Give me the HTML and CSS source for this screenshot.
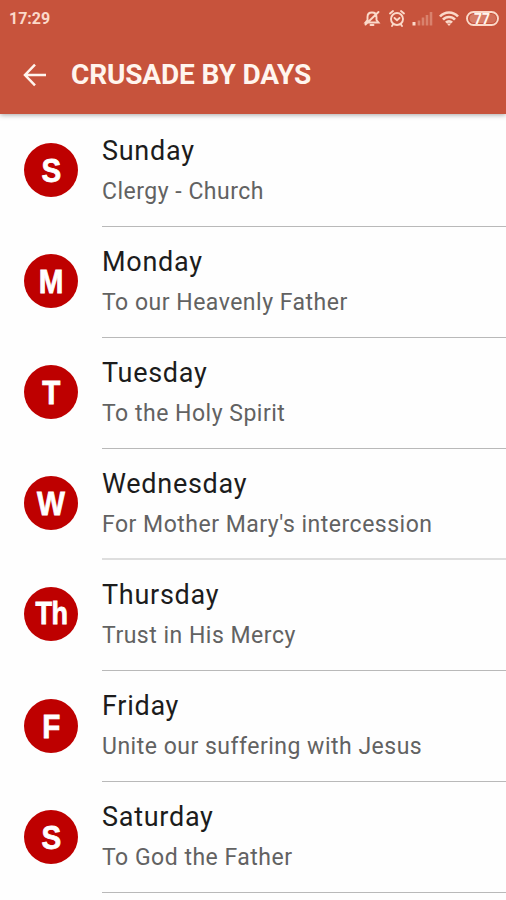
FILE: index.html
```html
<!DOCTYPE html>
<html lang="en">
<head>
<meta charset="utf-8">
<title>Crusade by Days</title>
<link rel="stylesheet" href="styles.css">
</head>
<body>
<header class="header">
  <div class="status">
    <span class="time">17:29</span>
    <svg class="status-icons" width="138" height="20" viewBox="0 0 138 20" fill="none" stroke="currentColor" stroke-width="1.900" stroke-linecap="round">
      <path d="M2.500 13.500h13l-2-2.500V8c0-3-1.600-4.500-4.500-4.500S4.500 5 4.500 8v3zM7.500 16h3M15.500 3L2.500 15.500"/>
      <circle cx="34" cy="10" r="6"/>
      <path d="M31.500 9L34 11.200l2.500-2.200M27 4.500l3-2.500M41 4.500l-3-2.500M30 15.500l-1 1.500M38 15.500l1 1.500"/>
      <path d="M51 16.500v-3.500" stroke-width="3" stroke-linecap="butt"/>
      <path d="M56 16.500v-5M60 16.500V8.500M64 16.500V6M68 16.500V3" opacity=".35" stroke-width="2.600" stroke-linecap="butt"/>
      <path d="M77 7.500a12 12 0 0 1 18 0M80 10.700a8 8 0 0 1 12 0M83 13.700a4 4 0 0 1 6 0" stroke-width="2.600" stroke-linecap="butt"/>
      <path d="M86 17l-2.200-2.500h4.400z" fill="currentColor" stroke="none"/>
      <rect x="104" y="3" width="31" height="13" rx="6.500"/>
      <path d="M111 5h12.500v9H111a4.500 4.500 0 0 1 0-9z" fill="currentColor" stroke="none" opacity=".3"/>
      <path d="M123.500 5h5a4.500 4.500 0 0 1 0 9h-5z" fill="currentColor" stroke="none" opacity=".2"/>
      <text class="battery" x="119" y="14.500" text-anchor="middle" fill="#fff5ee" stroke="none">77</text>
    </svg>
  </div>
  <div class="toolbar">
    <svg class="back" width="26" height="24" viewBox="0 0 26 24" fill="none" stroke="currentColor" stroke-width="2.500"><path d="M25 12H4M14 1.700L4 12l10 10.300"/></svg>
    <h1 class="heading">CRUSADE BY DAYS</h1>
  </div>
</header>
<main class="list">
  <div class="row"><span class="avatar"><b class="letter">S</b></span><div class="text"><div class="day">Sunday</div><div class="note">Clergy - Church</div></div></div>
  <div class="row"><span class="avatar"><b class="letter">M</b></span><div class="text"><div class="day">Monday</div><div class="note">To our Heavenly Father</div></div></div>
  <div class="row"><span class="avatar"><b class="letter">T</b></span><div class="text"><div class="day">Tuesday</div><div class="note">To the Holy Spirit</div></div></div>
  <div class="row"><span class="avatar"><b class="letter">W</b></span><div class="text soft"><div class="day">Wednesday</div><div class="note">For Mother Mary's intercession</div></div></div>
  <div class="row"><span class="avatar small"><b class="letter">Th</b></span><div class="text"><div class="day">Thursday</div><div class="note">Trust in His Mercy</div></div></div>
  <div class="row"><span class="avatar"><b class="letter">F</b></span><div class="text"><div class="day">Friday</div><div class="note">Unite our suffering with Jesus</div></div></div>
  <div class="row"><span class="avatar"><b class="letter">S</b></span><div class="text"><div class="day">Saturday</div><div class="note">To God the Father</div></div></div>
</main>
</body>
</html>
```
FILE: styles.css
```css
* { box-sizing: border-box; }
body {
  margin: 0;
  height: 900px;
  overflow: hidden;
  background: #fefefe;
  font-family: Roboto, "Liberation Sans", sans-serif;
}
.header {
  position: relative;
  height: 114px;
  background: #c7533c;
  color: #fff5ee;
  box-shadow: 0 1px 5px rgba(0, 0, 0, .35);
}
.status {
  height: 37px;
  padding: 0 5px 0 9px;
  display: flex;
  align-items: center;
  justify-content: space-between;
  color: #fbd9c9;
}
.time { font-size: 16px; font-weight: 700; }
.status-icons { display: block; }
.battery { font-size: 14px; font-weight: 700; }
.toolbar {
  height: 76px;
  padding-left: 21px;
  display: flex;
  align-items: center;
  gap: 24px;
}
.heading { margin: 0; font-size: 28px; line-height: 34px; font-weight: 700; letter-spacing: -.15px; }
.list { padding-top: 1.500px; }
.row {
  height: 111.100px;
  padding-left: 24px;
  display: flex;
  align-items: center;
  gap: 24px;
}
.avatar {
  width: 54px;
  height: 54px;
  margin-bottom: 2px;
  border-radius: 50%;
  background: #be0000;
  color: #fff;
  display: flex;
  align-items: center;
  justify-content: center;
  font: 700 34px/52px "Liberation Sans", sans-serif;
}
.letter { transform: scaleX(.87); -webkit-text-stroke: .8px #fff; }
.avatar.small { font-size: 31px; letter-spacing: -.5px; }
.text {
  flex: 1;
  height: 100%;
  padding-top: 17px;
  border-bottom: 1px solid #b9b9b9;
}
.text.soft { border-bottom: 2px solid #dedede; }
.day { font-size: 27px; line-height: 36px; color: #1c1c1c; letter-spacing: .72px; }
.note { font-size: 23px; line-height: 30px; margin-top: 8px; color: #626262; letter-spacing: .5px; }
```
